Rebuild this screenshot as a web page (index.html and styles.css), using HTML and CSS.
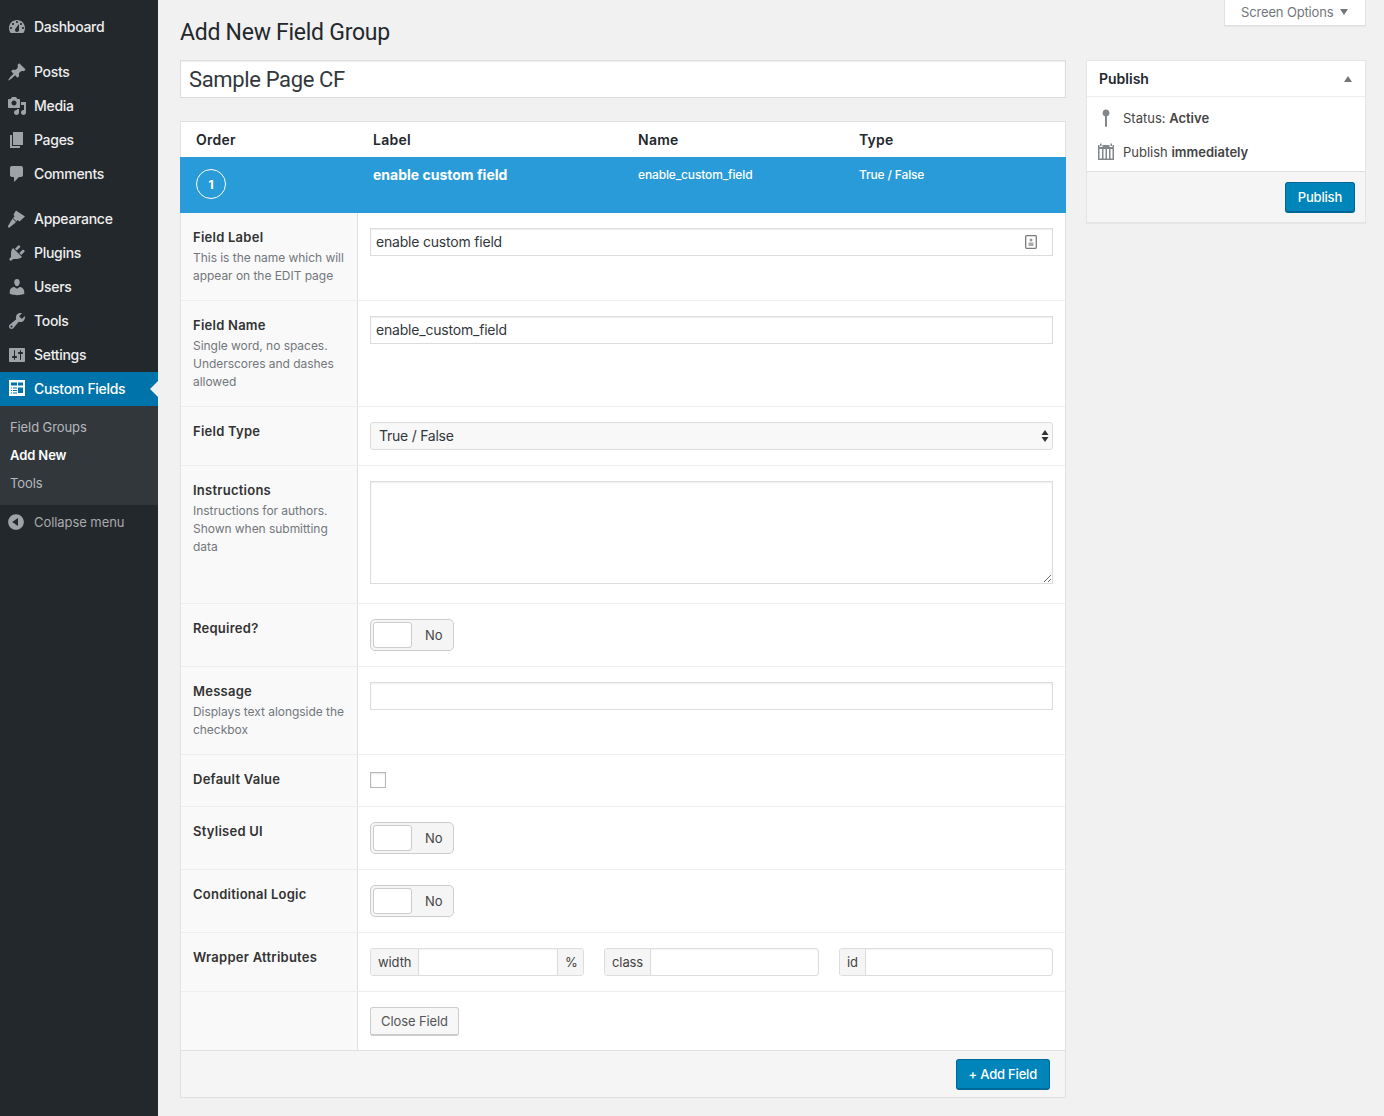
FILE: index.html
```html
<!DOCTYPE html>
<html lang="en">
<head>
  <meta charset="UTF-8">
  <title>Add New Field Group</title>
  <link rel="stylesheet" href="styles.css">
</head>
<body>
  <div class="wrap">
    <nav class="sidebar">
      <ul class="menu">
        <li class="menu-item"><svg viewBox="0 0 20 20"><path d="M3.76 16h12.48c1.1-1.37 1.76-3.11 1.76-5 0-4.42-3.58-8-8-8s-8 3.58-8 8c0 1.89.66 3.63 1.76 5zM10 4c.55 0 1 .45 1 1s-.45 1-1 1-1-.45-1-1 .45-1 1-1zM6 6c.55 0 1 .45 1 1s-.45 1-1 1-1-.45-1-1 .45-1 1-1zm8 0c.55 0 1 .45 1 1s-.45 1-1 1-1-.45-1-1 .45-1 1-1zm-5.37 5.55L12 7v6c0 1.1-.9 2-2 2s-2-.9-2-2c0-.57.24-1.08.63-1.45zM4 10c.55 0 1 .45 1 1s-.45 1-1 1-1-.45-1-1 .45-1 1-1zm12 0c.55 0 1 .45 1 1s-.45 1-1 1-1-.45-1-1 .45-1 1-1z" fill-rule="evenodd"/></svg>Dashboard</li>
        <li class="menu-sep"></li>
        <li class="menu-item"><svg viewBox="0 0 20 20"><path d="M10.44 3.02l1.82-1.82 6.36 6.35-1.83 1.82c-1.05-.68-2.48-.57-3.41.36l-.75.75c-.92.93-1.04 2.35-.35 3.41l-1.83 1.82-2.41-2.41-2.8 2.79c-.42.42-3.38 2.71-3.8 2.29s1.86-3.39 2.28-3.81l2.79-2.79L4.1 9.36l1.83-1.82c1.05.69 2.48.57 3.4-.36l.75-.75c.93-.92 1.05-2.35.36-3.41z"/></svg>Posts</li>
        <li class="menu-item"><svg viewBox="0 0 20 20"><path fill-rule="evenodd" d="M13 11V4c0-.55-.45-1-1-1h-1.67L9 1H5L3.67 3H2c-.55 0-1 .45-1 1v7c0 .55.45 1 1 1h10c.55 0 1-.45 1-1zM7 4.5c1.38 0 2.5 1.12 2.5 2.5S8.38 9.5 7 9.5 4.5 8.38 4.5 7 5.62 4.5 7 4.5zM14 6h5v10.5c0 1.38-1.12 2.5-2.5 2.5S14 17.88 14 16.5s1.12-2.5 2.5-2.5c.17 0 .34.02.5.05V9h-3V6zm-4 8.05V13h2v3.5c0 1.38-1.12 2.5-2.5 2.5S7 17.88 7 16.5 8.12 14 9.5 14c.17 0 .34.02.5.05z"/></svg>Media</li>
        <li class="menu-item"><svg viewBox="0 0 20 20"><path d="M6 15V2h10v13H6zm-1 1h8v2H3V5h2v11z"/></svg>Pages</li>
        <li class="menu-item"><svg viewBox="0 0 20 20"><path d="M5 2h9c1.1 0 2 .9 2 2v7c0 1.1-.9 2-2 2h-2l-5 5v-5H5c-1.1 0-2-.9-2-2V4c0-1.1.9-2 2-2z"/></svg>Comments</li>
        <li class="menu-sep"></li>
        <li class="menu-item"><svg viewBox="0 0 20 20"><path d="M9 1.500L18 7.500 12.500 12.500 10.500 11 9.500 12.500 6 9 7.500 7.500 6.500 5.500zM5.500 9.500L9 13 7.500 14.500 2.500 18.500C1.200 18.900.6 18.300 1 17z"/></svg>Appearance</li>
        <li class="menu-item"><svg viewBox="0 0 20 20"><path d="M13.11 4.36L9.87 7.6 8 5.73l3.24-3.24c.35-.34 1.05-.2 1.56.32.52.51.66 1.21.31 1.55zm-8 1.77l.91-1.12 9.01 9.01-1.19.84c-.71.71-2.63 1.16-3.82 1.16H6.14L4.9 17.26c-.59.59-1.54.59-2.12 0-.59-.58-.59-1.53 0-2.12l1.24-1.24v-3.88c0-1.13.4-3.19 1.09-3.89zm7.26 3.97l3.24-3.24c.34-.35 1.04-.21 1.55.31.52.51.66 1.21.31 1.55l-3.24 3.25z"/></svg>Plugins</li>
        <li class="menu-item"><svg viewBox="0 0 20 20"><path d="M10 9.25c-2.27 0-2.73-3.44-2.73-3.44C7 4.02 7.82 2 9.97 2c2.16 0 2.98 2.02 2.71 3.81 0 0-.41 3.44-2.68 3.44zm0 2.57L12.72 10c2.39 0 4.52 2.33 4.52 4.53v2.49s-3.65 1.13-7.24 1.13c-3.65 0-7.24-1.13-7.24-1.13v-2.49c0-2.25 1.94-4.48 4.47-4.48z"/></svg>Users</li>
        <li class="menu-item"><svg viewBox="0 0 20 20"><path fill-rule="evenodd" d="M16.68 9.77c-1.34 1.34-3.3 1.67-4.95.99l-5.41 6.52c-.99.99-2.59.99-3.58 0s-.99-2.59 0-3.57l6.52-5.42c-.68-1.65-.35-3.61.99-4.95 1.28-1.28 3.12-1.62 4.72-1.06l-2.89 2.89 2.82 2.82 2.86-2.87c.53 1.58.18 3.39-1.08 4.65zM3.81 16.21c.4.39 1.04.39 1.43 0 .4-.4.4-1.04 0-1.43-.39-.4-1.03-.4-1.43 0-.39.39-.39 1.03 0 1.43z"/></svg>Tools</li>
        <li class="menu-item"><svg viewBox="0 0 20 20"><path fill-rule="evenodd" d="M18 16V4c0-.55-.45-1-1-1H3c-.55 0-1 .45-1 1v12c0 .55.45 1 1 1h14c.55 0 1-.45 1-1zM8 11h1c.55 0 1 .45 1 1s-.45 1-1 1H8v1.5c0 .28-.22.5-.5.5s-.5-.22-.5-.5V13H6c-.55 0-1-.45-1-1s.45-1 1-1h1V5.5c0-.28.22-.5.5-.5s.5.22.5.5V11zm5-2h-1c-.55 0-1-.45-1-1s.45-1 1-1h1V5.5c0-.28.22-.5.5-.5s.5.22.5.5V7h1c.55 0 1 .45 1 1s-.45 1-1 1h-1v5.5c0 .28-.22.5-.5.5s-.5-.22-.5-.5V9z"/></svg>Settings</li>
        <li class="menu-item current"><svg viewBox="0 0 20 20"><path fill-rule="evenodd" d="M2 1h16v16H2zM4 3.500h6v3H4zM11 3.500h5v3h-5zM4 8.500h1v1H4zM6 8.500h4v1H6zM4 11h1v1H4zM6 11h4v1H6zM4 13.500h1v1H4zM6 13.500h4v1H6zM11 8.500h5v5.500h-5z"/></svg>Custom Fields</li>
      </ul>
      <ul class="submenu">
        <li>Field Groups</li>
        <li class="sub-current">Add New</li>
        <li>Tools</li>
      </ul>
      <div class="collapse"><svg viewBox="0 0 20 20"><path fill-rule="evenodd" d="M10 2.160c4.330 0 7.840 3.510 7.840 7.840s-3.510 7.840-7.840 7.840S2.160 14.330 2.160 10 5.710 2.160 10 2.160zm2 11.720V6.120L6.180 9.970z"/></svg>Collapse menu</div>
    </nav>

    <main class="content">
      <div class="screen-options-bar">
        <div class="screen-options">Screen Options<span class="arrow-down"></span></div>
      </div>
      <h1 class="page-title">Add New Field Group</h1>
      <div class="columns">
        <div class="col-main">
          <input class="title-input" type="text" value="Sample Page CF">

          <div class="fields-box">
            <div class="fields-head">
              <div class="c-order">Order</div>
              <div class="c-label">Label</div>
              <div class="c-name">Name</div>
              <div class="c-type">Type</div>
            </div>
            <div class="field-bar">
              <div class="c-order"><span class="order-badge">1</span></div>
              <div class="c-label bar-title">enable custom field</div>
              <div class="c-name">enable_custom_field</div>
              <div class="c-type">True / False</div>
            </div>

            <div class="row">
              <div class="row-label"><label>Field Label</label><p>This is the name which will appear on the EDIT page</p></div>
              <div class="row-input">
                <div class="input-icon">
                  <input class="text-input" type="text" value="enable custom field">
                  <svg class="contact-icon" viewBox="0 0 12 14"><path fill="none" stroke="#7b7b7b" stroke-width="1.300" d="M1.500.7h9a.8.8 0 0 1 .8.800v11a.8.8 0 0 1-.8.800h-9a.8.8 0 0 1-.8-.800v-11a.8.8 0 0 1 .8-.800z"/><circle cx="6" cy="5" r="1.500" fill="#999"/><rect x="3.500" y="7.500" width="5" height="3.500" fill="#aaa"/></svg>
                </div>
              </div>
            </div>
            <div class="row">
              <div class="row-label"><label>Field Name</label><p>Single word, no spaces. Underscores and dashes allowed</p></div>
              <div class="row-input"><input class="text-input" type="text" value="enable_custom_field"></div>
            </div>
            <div class="row">
              <div class="row-label"><label>Field Type</label></div>
              <div class="row-input">
                <div class="select-box">True / False
                  <svg class="select-arrows" viewBox="0 0 8 14"><path d="M4 1l3.500 5h-7zM4 13L.5 8h7z"/></svg>
                </div>
              </div>
            </div>
            <div class="row">
              <div class="row-label"><label>Instructions</label><p>Instructions for authors. Shown when submitting data</p></div>
              <div class="row-input"><textarea class="text-area"></textarea></div>
            </div>
            <div class="row">
              <div class="row-label"><label>Required?</label></div>
              <div class="row-input"><div class="switch"><span class="knob"></span><span class="switch-text">No</span></div></div>
            </div>
            <div class="row">
              <div class="row-label"><label>Message</label><p>Displays text alongside the checkbox</p></div>
              <div class="row-input"><input class="text-input" type="text"></div>
            </div>
            <div class="row row-default">
              <div class="row-label"><label>Default Value</label></div>
              <div class="row-input"><span class="checkbox"></span></div>
            </div>
            <div class="row">
              <div class="row-label"><label>Stylised UI</label></div>
              <div class="row-input"><div class="switch"><span class="knob"></span><span class="switch-text">No</span></div></div>
            </div>
            <div class="row">
              <div class="row-label"><label>Conditional Logic</label></div>
              <div class="row-input"><div class="switch"><span class="knob"></span><span class="switch-text">No</span></div></div>
            </div>
            <div class="row">
              <div class="row-label"><label>Wrapper Attributes</label></div>
              <div class="row-input wrapper-attrs">
                <div class="attr"><span class="addon">width</span><input type="text"><span class="addon addon-right">%</span></div>
                <div class="attr"><span class="addon">class</span><input type="text"></div>
                <div class="attr"><span class="addon">id</span><input type="text"></div>
              </div>
            </div>
            <div class="row row-last">
              <div class="row-label"></div>
              <div class="row-input"><button class="btn">Close Field</button></div>
            </div>
            <div class="fields-foot"><button class="btn-primary">+ Add Field</button></div>
          </div>
        </div>

        <aside class="col-side">
          <div class="postbox">
            <div class="postbox-head"><h2>Publish</h2><span class="arrow-up"></span></div>
            <div class="postbox-body">
              <div class="pub-line">
                <svg viewBox="0 0 20 20"><path d="M10 1.500a3.400 3.400 0 0 1 1 6.650V18.500l-1 .5-1-.5V8.150a3.400 3.400 0 0 1 1-6.650z"/></svg>
                <span>Status: <b>Active</b></span>
              </div>
              <div class="pub-line">
                <svg viewBox="0 0 20 20"><path fill-rule="evenodd" d="M4 1.500h1.500V4H4zM14.500 1.500H16V4h-1.500zM2 3h1.500v2h3V3h7v2h3V3H18v15H2zM3.500 7v9.500H6V7zM7.500 7v9.500h2V7zM11 7v9.500h2V7zM14.500 7v9.500h2V7z"/></svg>
                <span>Publish <b>immediately</b></span>
              </div>
            </div>
            <div class="postbox-foot"><button class="btn-primary">Publish</button></div>
          </div>
        </aside>
      </div>
    </main>
  </div>
</body>
</html>
```

FILE: styles.css
```css
* {
  box-sizing: border-box;
}

html, body {
  margin: 0;
  padding: 0;
  height: 100%;
}

body {
  font-family: 'Inter', 'Liberation Sans', sans-serif;
  font-size: 13px;
  color: #444;
  background-color: #f1f1f1;
  overflow: hidden;
}

ul {
  list-style: none;
  margin: 0;
  padding: 0;
}

.wrap {
  display: flex;
  height: 1116px;
}

/* sidebar */
.sidebar {
  width: 158px;
  flex: none;
  background-color: #23282d;
  padding-top: 10px;
}

.menu-item {
  position: relative;
  height: 34px;
  display: flex;
  align-items: center;
  gap: 7px;
  padding: 0 0 2px 7px;
  font-size: 14px;
  font-weight: 500;
  letter-spacing: -0.3px;
  color: #eee;
}

.menu-item svg {
  width: 20px;
  height: 20px;
  margin-top: 2px;
  fill: #9ea3a8;
  flex: none;
}

.menu-sep {
  height: 11px;
}

.menu-item.current {
  background-color: #0073aa;
  color: #fff;
}

.menu-item.current svg {
  fill: #fff;
}

.menu-item.current::after {
  content: '';
  position: absolute;
  right: 0;
  top: 9px;
  border: 8px solid transparent;
  border-right-color: #f1f1f1;
  border-left-width: 0;
}

.submenu {
  background-color: #32373c;
  padding: 7px 0 8px;
}

.submenu li {
  height: 28px;
  line-height: 28px;
  padding-left: 10px;
  font-size: 13px;
  letter-spacing: -0.1px;
  color: #b4b9be;
}

.submenu .sub-current {
  color: #fff;
  font-weight: 600;
}

.collapse {
  height: 34px;
  display: flex;
  align-items: center;
  gap: 8px;
  padding-left: 6px;
  font-size: 13px;
  letter-spacing: -0.07px;
  color: #aaa;
}

.collapse svg {
  width: 20px;
  height: 20px;
  fill: #9ea3a8;
  flex: none;
}

/* main */
.content {
  position: relative;
  flex: 1;
  padding: 0 18px 0 22px;
}

.screen-options-bar {
  position: absolute;
  top: 0;
  right: 18px;
}

.screen-options {
  width: 142px;
  height: 26px;
  background-color: #fff;
  border: 1px solid #e0e0e0;
  border-top: none;
  box-shadow: 0 1px 1px rgba(0,0,0,0.04);
  display: flex;
  align-items: center;
  padding: 0 0 2px 16px;
  font-size: 13px;
  letter-spacing: -0.15px;
  color: #72777c;
}

.arrow-down {
  margin-left: 7px;
  border-left: 4px solid transparent;
  border-right: 4px solid transparent;
  border-top: 6px solid #72777c;
}

.page-title {
  margin: 0;
  height: 60px;
  padding-top: 18px;
  font-family: 'Roboto', 'Liberation Sans', sans-serif;
  font-size: 23px;
  line-height: 30px;
  font-weight: 400;
  letter-spacing: -0.27px;
  color: #23282d;
}

.columns {
  display: flex;
  gap: 20px;
  align-items: flex-start;
}

.col-main {
  width: 886px;
  flex: none;
}

.col-side {
  width: 280px;
  flex: none;
}

.title-input {
  display: block;
  width: 100%;
  height: 38px;
  padding: 0 8px;
  border: 1px solid #ddd;
  background-color: #fff;
  font-family: 'Roboto', 'Liberation Sans', sans-serif;
  font-size: 22px;
  letter-spacing: -0.36px;
  color: #32373c;
  box-shadow: inset 0 1px 2px rgba(0,0,0,0.07);
  outline: none;
}

/* fields table */
.fields-box {
  margin-top: 23px;
  background-color: #fff;
  border: 1px solid #e1e1e1;
}

.fields-head, .field-bar {
  display: flex;
  padding-left: 15px;
}

.fields-head {
  height: 35px;
  align-items: center;
  font-size: 14px;
  font-weight: 600;
  letter-spacing: 0.25px;
  color: #23282d;
}

.field-bar {
  height: 56px;
  margin: 0 -1px;
  padding-left: 16px;
  background-color: #2a9bd9;
  color: #fff;
  font-size: 12px;
  font-weight: 500;
  letter-spacing: -0.15px;
  padding-top: 9px;
}

.field-bar .c-name, .field-bar .c-type {
  padding-top: 1px;
}

.c-order {
  width: 177px;
  flex: none;
}

.c-label {
  width: 265px;
  flex: none;
}

.c-name {
  width: 221px;
  flex: none;
}

.bar-title {
  font-size: 14px;
  font-weight: 700;
  letter-spacing: 0;
}

.order-badge {
  display: flex;
  align-items: center;
  justify-content: center;
  width: 30px;
  height: 30px;
  margin-top: 3px;
  border: 1px solid #fff;
  border-radius: 50%;
  font-size: 12px;
  font-weight: 700;
}

.row {
  display: flex;
  border-bottom: 1px solid #eee;
}

.row-label {
  width: 177px;
  flex: none;
  padding: 15px 10px 15px 12px;
  background-color: #f9f9f9;
  border-right: 1px solid #e1e1e1;
}

.row-label label {
  display: block;
  height: 21px;
  line-height: 18px;
  font-size: 13px;
  font-weight: 600;
  letter-spacing: 0.25px;
  color: #333;
}

.row-label p {
  margin: 0;
  font-size: 12px;
  line-height: 18px;
  letter-spacing: -0.04px;
  color: #72777c;
}

.row-input {
  flex: 1;
  padding: 15px 12px;
  min-width: 0;
}

.row-default .row-input {
  padding-top: 17px;
}

.row-last {
  border-bottom: 1px solid #e1e1e1;
}

.row-last .row-input {
  padding-bottom: 14px;
}

.input-icon {
  position: relative;
}

.contact-icon {
  position: absolute;
  top: 7px;
  right: 16px;
  width: 12px;
  height: 14px;
}

.text-input {
  display: block;
  width: 100%;
  height: 28px;
  padding: 0 5px 2px;
  border: 1px solid #ddd;
  background-color: #fff;
  font-family: inherit;
  font-size: 14px;
  letter-spacing: -0.2px;
  color: #32373c;
  box-shadow: inset 0 1px 2px rgba(0,0,0,0.07);
  outline: none;
}

.select-box {
  position: relative;
  height: 28px;
  line-height: 26px;
  padding-left: 8px;
  border: 1px solid #ddd;
  border-radius: 3px;
  background-color: #f8f8f8;
  font-size: 14px;
  letter-spacing: -0.25px;
  color: #32373c;
}

.select-arrows {
  position: absolute;
  top: 6px;
  right: 3px;
  width: 8px;
  height: 14px;
  fill: #333;
}

.text-area {
  display: block;
  width: 100%;
  height: 103px;
  margin-bottom: 4px;
  border: 1px solid #ddd;
  background-color: #fff;
  box-shadow: inset 0 1px 2px rgba(0,0,0,0.07);
  outline: none;
}

.switch {
  display: flex;
  align-items: center;
  width: 84px;
  height: 32px;
  padding-left: 2px;
  border: 1px solid #ccc;
  border-radius: 5px;
  background-color: #f5f5f5;
}

.knob {
  width: 39px;
  height: 26px;
  background-color: #fff;
  border: 1px solid #ccc;
  border-radius: 3px;
}

.switch-text {
  margin-left: 13px;
  font-size: 13px;
  color: #444;
}

.checkbox {
  display: block;
  width: 16px;
  height: 16px;
  border: 1px solid #b4b9be;
  background-color: #fff;
  box-shadow: inset 0 1px 2px rgba(0,0,0,0.1);
}

.wrapper-attrs {
  display: flex;
  gap: 20px;
}

.attr {
  display: flex;
  height: 28px;
  border: 1px solid #ddd;
  border-radius: 3px;
  background-color: #fff;
  font-size: 13px;
  letter-spacing: -0.1px;
  color: #444;
  overflow: hidden;
}

.attr:nth-child(1) {
  width: 214px;
}

.attr:nth-child(2) {
  width: 215px;
}

.attr:nth-child(3) {
  width: 214px;
}

.attr input {
  flex: 1;
  min-width: 0;
  border: none;
  outline: none;
  background: none;
  box-shadow: inset 0 1px 2px rgba(0,0,0,0.05);
}

.addon {
  padding: 0 7px;
  line-height: 26px;
  background-color: #f5f5f5;
  border-right: 1px solid #ddd;
}

.addon-right {
  width: 26px;
  border-right: none;
  border-left: 1px solid #ddd;
}

.btn {
  display: block;
  width: 89px;
  height: 29px;
  padding: 0;
  border: 1px solid #ccc;
  border-bottom-width: 2px;
  border-radius: 3px;
  background-color: #f7f7f7;
  font-family: inherit;
  font-size: 13px;
  letter-spacing: -0.1px;
  color: #555;
}

.fields-foot {
  height: 46px;
  padding: 8px 15px 0 0;
  display: flex;
  justify-content: flex-end;
  align-items: flex-start;
  background-color: #f5f5f5;
}

.btn-primary {
  height: 31px;
  padding: 0 12px;
  border: 1px solid #006799;
  border-bottom-width: 2px;
  border-radius: 3px;
  background-color: #0085ba;
  font-family: inherit;
  font-size: 13px;
  font-weight: 500;
  letter-spacing: -0.2px;
  color: #fff;
}

/* publish box */
.postbox {
  background-color: #fff;
  border: 1px solid #e5e5e5;
  box-shadow: 0 1px 1px rgba(0,0,0,0.04);
}

.postbox-head {
  height: 36px;
  display: flex;
  align-items: center;
  justify-content: space-between;
  padding: 0 13px 0 12px;
  border-bottom: 1px solid #eee;
}

.postbox-head h2 {
  margin: 0;
  font-size: 14px;
  font-weight: 600;
  color: #23282d;
}

.arrow-up {
  border-left: 4px solid transparent;
  border-right: 4px solid transparent;
  border-bottom: 6px solid #72777c;
}

.postbox-body {
  padding: 4px 0 2px 9px;
}

.pub-line {
  display: flex;
  align-items: center;
  gap: 7px;
  height: 34px;
  font-size: 13px;
  color: #444;
}

.pub-line svg {
  width: 20px;
  height: 20px;
  fill: #82878c;
  flex: none;
}

.pub-line b {
  font-weight: 600;
}

.postbox-foot {
  height: 51px;
  padding: 10px 10px 0 0;
  display: flex;
  justify-content: flex-end;
  align-items: flex-start;
  background-color: #f5f5f5;
  border-top: 1px solid #ddd;
}
```
